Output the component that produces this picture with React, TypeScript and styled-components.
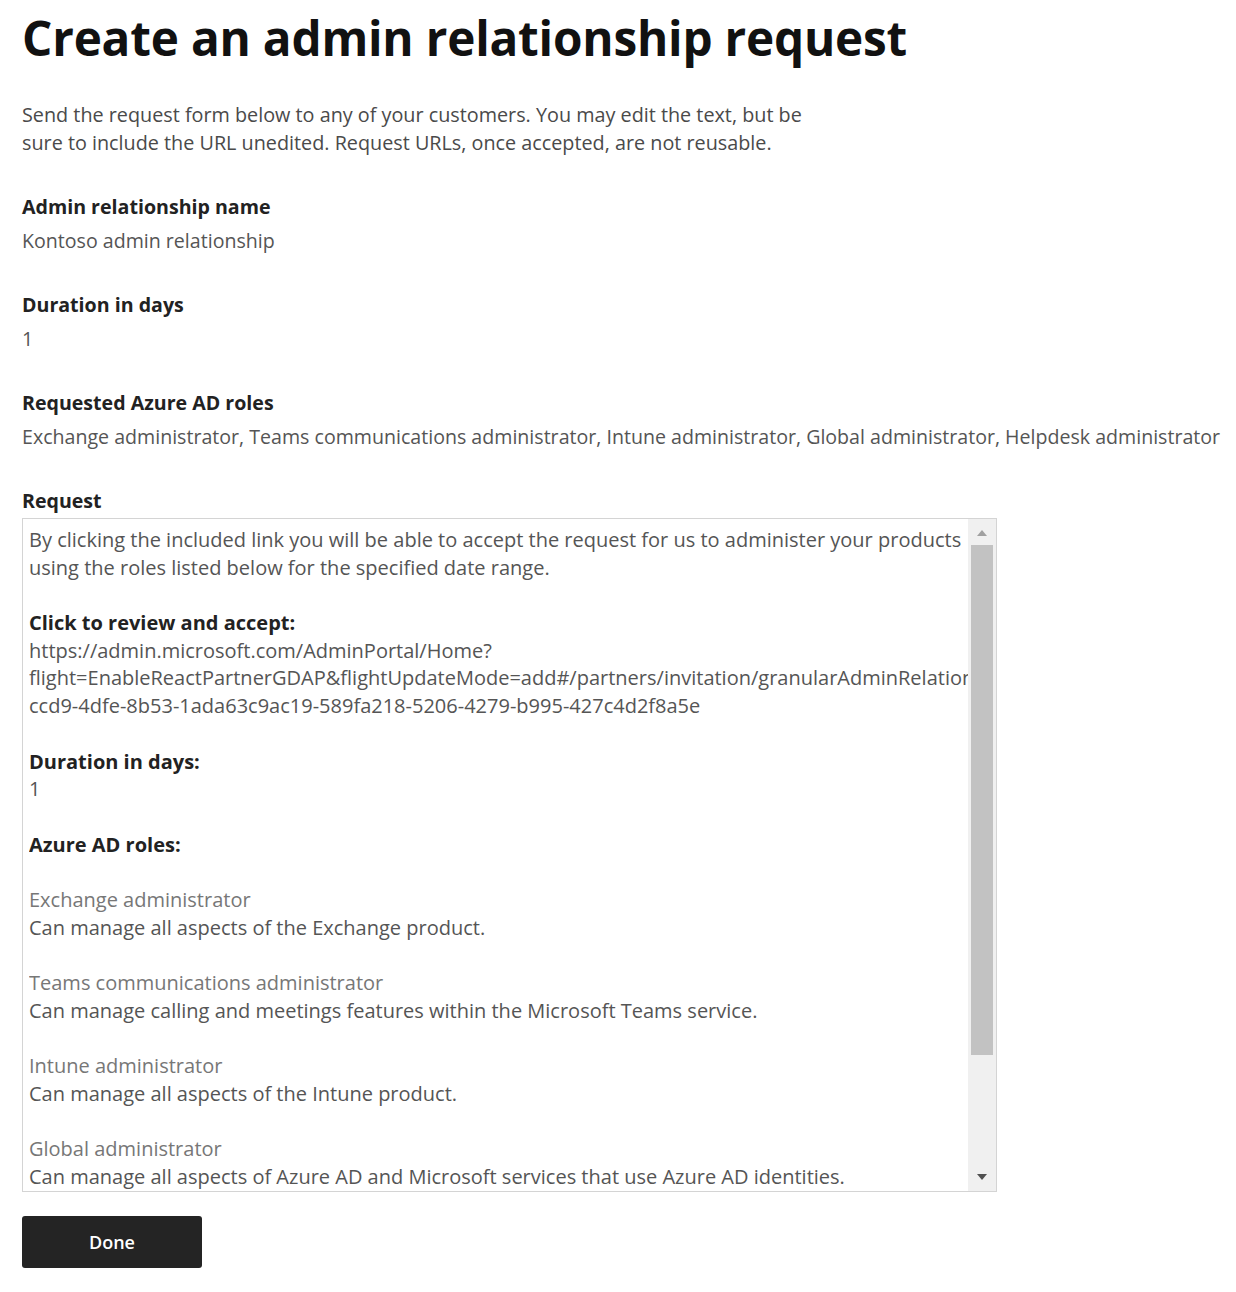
import React from "react";
import styled, { createGlobalStyle } from "styled-components";

const GlobalStyle = createGlobalStyle`
  html, body {
    margin: 0;
    padding: 0;
    background: #ffffff;
  }
  body {
    font-family: "Open Sans", "Noto Sans", "Liberation Sans", sans-serif;
    color: #444;
  }
`;

const Page = styled.main`
  padding: 8px 10px 24px 22px;
  width: 1236px;
  box-sizing: border-box;
`;

const Title = styled.h1`
  margin: 0;
  font-size: 47.7px;
  line-height: 60px;
  font-weight: 700;
  color: #111;
  letter-spacing: -0.2px;
  white-space: nowrap;
`;

const Intro = styled.p`
  margin: 33px 0 0 0;
  font-size: 19.8px;
  line-height: 28px;
  color: #4a4a4a;
  white-space: nowrap;
`;

const Field = styled.section`
  margin-top: 36px;
  display: flex;
  flex-direction: column;
  gap: 6px;
`;

const Label = styled.h2`
  margin: 0;
  font-size: 19.6px;
  line-height: 28px;
  font-weight: 700;
  color: #222;
  white-space: nowrap;
`;

const Value = styled.div`
  font-size: 19.6px;
  line-height: 28px;
  color: #555;
  white-space: nowrap;
`;

const RequestBox = styled.div`
  margin-top: -3px;
  width: 975px;
  height: 674px;
  box-sizing: border-box;
  border: 1px solid #d4d4d4;
  display: flex;
  overflow: hidden;
  background: #fff;
`;

const RequestBody = styled.div`
  flex: 1;
  min-width: 0;
  overflow: hidden;
  padding: 7px 0 0 6px;
  font-size: 20px;
  line-height: 27.7px;
  color: #555;
`;

const Line = styled.div<{ $tone?: "strong" | "muted" | "normal" }>`
  white-space: nowrap;
  overflow: hidden;
  height: 27.7px;
  font-weight: ${(p) => (p.$tone === "strong" ? 700 : 400)};
  color: ${(p) =>
    p.$tone === "strong" ? "#222" : p.$tone === "muted" ? "#777" : "#555"};
`;

const Track = styled.div`
  width: 28px;
  flex: none;
  background: #f0f0f0;
  display: flex;
  flex-direction: column;
  align-items: center;
  padding: 2px 0;
  box-sizing: border-box;
`;

const Arrow = styled.div`
  height: 24px;
  width: 100%;
  display: flex;
  align-items: center;
  justify-content: center;
  flex: none;
`;

const Thumb = styled.div`
  width: 22px;
  height: 510px;
  background: #c2c2c2;
  flex: none;
`;

const Spacer = styled.div`
  flex: 1;
`;

const DoneButton = styled.button`
  margin-top: 24px;
  width: 180px;
  height: 52px;
  padding: 0;
  border: none;
  border-radius: 3px;
  background: #242424;
  color: #fff;
  font-family: inherit;
  font-size: 18px;
  line-height: 52px;
  font-weight: 600;
  cursor: pointer;
  display: block;
`;

const roles = [
  ["Exchange administrator", "Can manage all aspects of the Exchange product."],
  [
    "Teams communications administrator",
    "Can manage calling and meetings features within the Microsoft Teams service.",
  ],
  ["Intune administrator", "Can manage all aspects of the Intune product."],
  [
    "Global administrator",
    "Can manage all aspects of Azure AD and Microsoft services that use Azure AD identities.",
  ],
  [
    "Helpdesk administrator",
    "Can reset passwords for non-administrators and Helpdesk administrators.",
  ],
];

const Caret = ({ up }: { up?: boolean }) => (
  <svg width="10" height="6" viewBox="0 0 10 6">
    <path d={up ? "M0 6 L5 0 L10 6 Z" : "M0 0 L5 6 L10 0 Z"} fill={up ? "#a0a0a0" : "#505050"} />
  </svg>
);

export default function App() {
  return (
    <Page>
      <GlobalStyle />
      <Title>Create an admin relationship request</Title>
      <Intro>
        Send the request form below to any of your customers. You may edit the text, but be
        <br />
        sure to include the URL unedited. Request URLs, once accepted, are not reusable.
      </Intro>

      <Field>
        <Label>Admin relationship name</Label>
        <Value>Kontoso admin relationship</Value>
      </Field>

      <Field>
        <Label>Duration in days</Label>
        <Value>1</Value>
      </Field>

      <Field>
        <Label>Requested Azure AD roles</Label>
        <Value>
          Exchange administrator, Teams communications administrator, Intune administrator,
          Global administrator, Helpdesk administrator
        </Value>
      </Field>

      <Field>
        <Label>Request</Label>
        <RequestBox>
          <RequestBody>
            <Line>
              By clicking the included link you will be able to accept the request for us to
              administer your products
            </Line>
            <Line>using the roles listed below for the specified date range.</Line>
            <Line />
            <Line $tone="strong">Click to review and accept:</Line>
            <Line>https://admin.microsoft.com/AdminPortal/Home?</Line>
            <Line>
              flight=EnableReactPartnerGDAP&amp;flightUpdateMode=add#/partners/invitation/granularAdminRelationship/8f2b41a6-
            </Line>
            <Line>ccd9-4dfe-8b53-1ada63c9ac19-589fa218-5206-4279-b995-427c4d2f8a5e</Line>
            <Line />
            <Line $tone="strong">Duration in days:</Line>
            <Line>1</Line>
            <Line />
            <Line $tone="strong">Azure AD roles:</Line>
            {roles.map(([name, desc]) => (
              <React.Fragment key={name}>
                <Line />
                <Line $tone="muted">{name}</Line>
                <Line>{desc}</Line>
              </React.Fragment>
            ))}
          </RequestBody>
          <Track>
            <Arrow>
              <Caret up />
            </Arrow>
            <Thumb />
            <Spacer />
            <Arrow>
              <Caret />
            </Arrow>
          </Track>
        </RequestBox>
      </Field>

      <DoneButton>Done</DoneButton>
    </Page>
  );
}
